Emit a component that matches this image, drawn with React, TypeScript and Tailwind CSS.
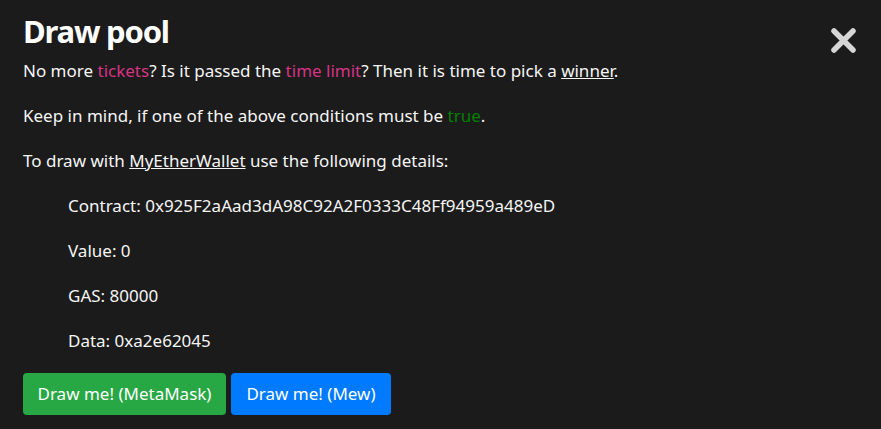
export default function App() {
  const p = "text-[17px] leading-[24px] mb-[21px]";
  return (
    <div
      className="bg-[#1b1b1b] text-[#f5f5f5] h-[429px] w-full relative px-[23px] pt-[12px]"
      style={{ fontFamily: '"Noto Sans", "Open Sans", sans-serif' }}
    >
      <button className="absolute left-[830px] top-[27px] w-[27px] h-[27px] flex items-center justify-center" aria-label="Close">
        <svg width="27" height="27" viewBox="0 0 27 27">
          <path d="M4 4 L23 23 M23 4 L4 23" stroke="#d6d6d6" strokeWidth="5.5" strokeLinecap="round" />
        </svg>
      </button>
      <h2 className="text-[31px] leading-[38px] font-bold tracking-[-1.2px] text-white mb-[9px]">Draw pool</h2>
      <p className={p}>
        No more <span className="text-[#d63384]">tickets</span>? Is it passed the{" "}
        <span className="text-[#d63384]">time limit</span>? Then it is time to pick a{" "}
        <a className="underline">winner</a>.
      </p>
      <p className={p}>
        Keep in mind, if one of the above conditions must be <span className="text-[#008000]">true</span>.
      </p>
      <p className={p}>
        To draw with <a className="underline">MyEtherWallet</a> use the following details:
      </p>
      <div className="pl-[45px]">
        <p className={p}>Contract: 0x925F2aAad3dA98C92A2F0333C48Ff94959a489eD</p>
        <p className={p}>Value: 0</p>
        <p className={p}>GAS: 80000</p>
        <p className={p}>Data: 0xa2e62045</p>
      </div>
      <div className="flex gap-[5px] -mt-[1px]">
        <button className="w-[203px] h-[42px] rounded-[4px] bg-[#28a745] text-white text-[17px] flex items-center justify-center">
          Draw me! (MetaMask)
        </button>
        <button className="w-[160px] h-[42px] rounded-[4px] bg-[#007bff] text-white text-[17px] flex items-center justify-center">
          Draw me! (Mew)
        </button>
      </div>
    </div>
  );
}
